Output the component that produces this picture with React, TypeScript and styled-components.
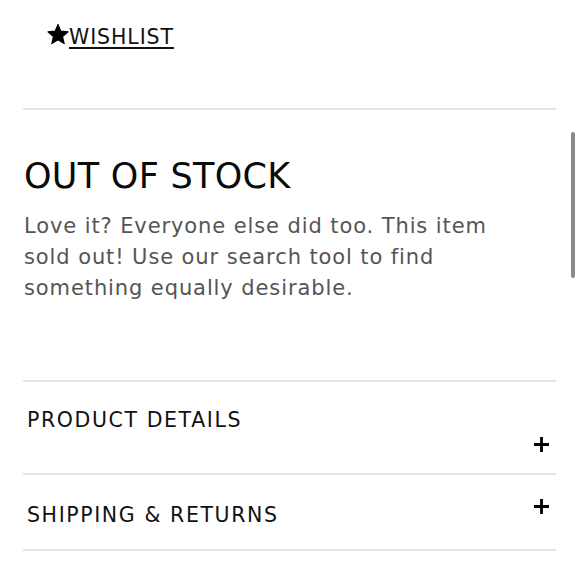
import React from "react";
import styled, { createGlobalStyle } from "styled-components";

const Global = createGlobalStyle`
  html, body { margin: 0; padding: 0; background: #fff; }
  body { font-family: "DejaVu Sans", "Liberation Sans", sans-serif; color: #111; }
  * { box-sizing: border-box; }
`;

const Page = styled.div`
  position: relative;
  width: 580px;
  height: 580px;
  overflow: hidden;
  padding: 0 24px 0 23px;
`;

const WishRow = styled.div`
  display: flex;
  gap: 0;
  padding: 24px 0 0 24px;
  height: 108px;
  align-items: flex-start;
`;

const WishLink = styled.a`
  font-size: 20.5px;
  letter-spacing: 0.9px;
  color: #111;
  text-decoration: underline;
  text-underline-offset: 3px;
  text-decoration-thickness: 1.5px;
  line-height: 24px;
  margin-top: 1px;
`;

const Divider = styled.hr`
  border: none;
  height: 2px;
  background: #e4e4e4;
  margin: 0;
`;

const StockSection = styled.section`
  padding: 46px 0 0 1px;
  height: 270px;
`;

const Title = styled.h2`
  margin: 0 0 15px;
  font-size: 35px;
  font-weight: normal;
  letter-spacing: 0.3px;
  color: #0a0a0a;
  line-height: 40px;
`;

const Body = styled.p`
  margin: 0;
  max-width: 476px;
  font-size: 21px;
  line-height: 31px;
  letter-spacing: 0.9px;
  color: #555;
`;

const Item = styled.div<{ $height: number; $pad: number }>`
  display: flex;
  justify-content: space-between;
  align-items: flex-start;
  height: ${(p) => p.$height}px;
  padding: ${(p) => p.$pad}px 6px 0 4px;
`;

const ItemTitle = styled.span`
  font-size: 20.5px;
  letter-spacing: 1.6px;
  color: #111;
  line-height: 26px;
`;

const PlusBox = styled.span<{ $top: number }>`
  display: flex;
  margin-top: ${(p) => p.$top}px;
`;

const Scroll = styled.div`
  position: absolute;
  right: 5px;
  top: 132px;
  width: 4px;
  height: 146px;
  border-radius: 2px;
  background: #8a8a8a;
`;

const Star = () => (
  <svg width="22" height="21" viewBox="0 0 24 23">
    <path
      d="M12 0.5l3.1 7.3 7.9 0.7-6 5.2 1.8 7.8L12 17.4l-6.8 4.1 1.8-7.8-6-5.2 7.9-0.7z"
      fill="#000"
      stroke="#000"
      strokeWidth="1.2"
      strokeLinejoin="round"
    />
  </svg>
);

const Plus = () => (
  <svg width="17" height="17" viewBox="0 0 17 17">
    <path d="M8.5 1v15M1 8.5h15" stroke="#000" strokeWidth="2.8" />
  </svg>
);

export default function App() {
  return (
    <>
      <Global />
      <Page>
        <WishRow>
          <Star />
          <WishLink>WISHLIST</WishLink>
        </WishRow>
        <Divider />
        <StockSection>
          <Title>OUT OF STOCK</Title>
          <Body>
            Love it? Everyone else did too. This item sold out! Use our search tool to find
            something equally desirable.
          </Body>
        </StockSection>
        <Divider />
        <Item $height={91} $pad={25}>
          <ItemTitle>PRODUCT DETAILS</ItemTitle>
          <PlusBox $top={29}>
            <Plus />
          </PlusBox>
        </Item>
        <Divider />
        <Item $height={74} $pad={27}>
          <ItemTitle>SHIPPING &amp; RETURNS</ItemTitle>
          <PlusBox $top={-4}>
            <Plus />
          </PlusBox>
        </Item>
        <Divider />
        <Scroll />
      </Page>
    </>
  );
}
